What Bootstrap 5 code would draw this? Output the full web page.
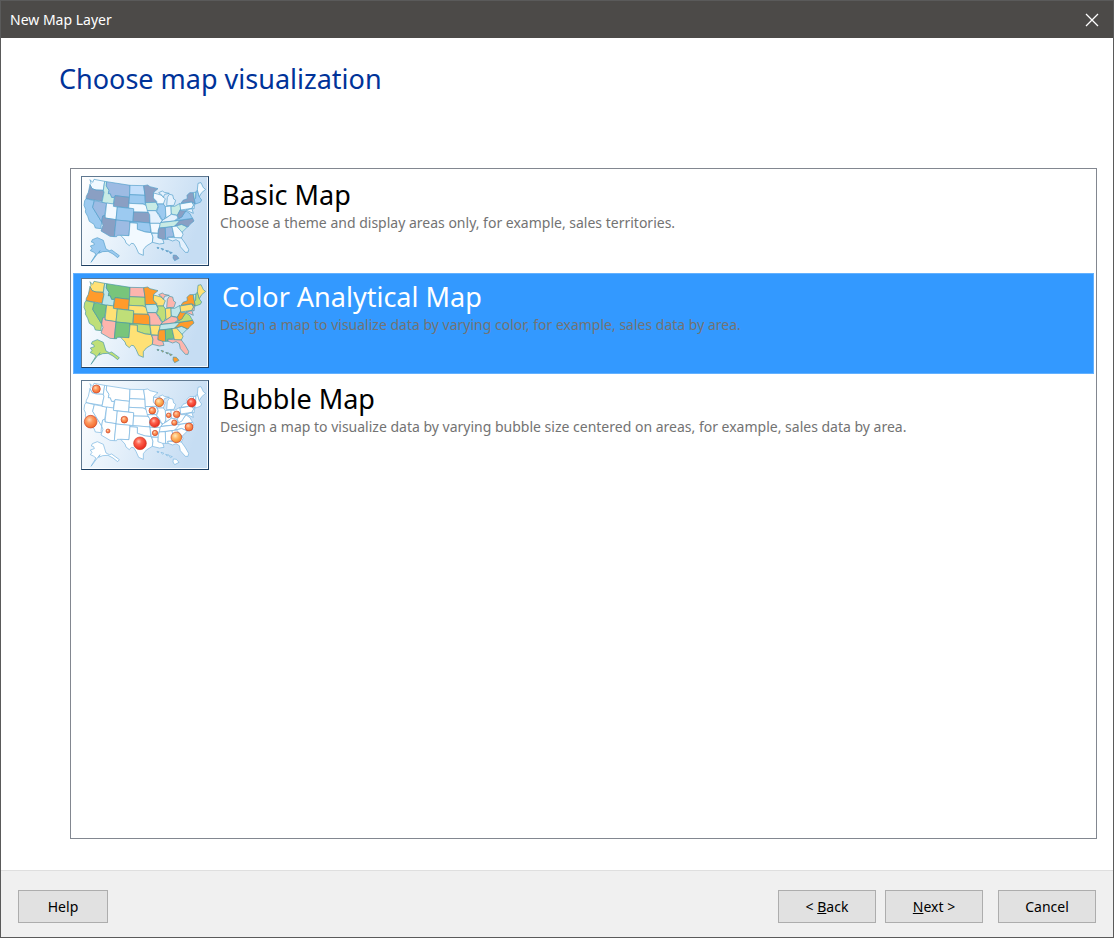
<!DOCTYPE html>
<html lang="en">
<head>
<meta charset="utf-8">
<meta name="viewport" content="width=device-width, initial-scale=1">
<title>New Map Layer</title>
<link href="https://cdn.jsdelivr.net/npm/bootstrap@5.3.0/dist/css/bootstrap.min.css" rel="stylesheet">
<style>
  body { font-family: "Noto Sans", "Open Sans", sans-serif; font-size: 14px; line-height: 20px; color: #000; }
  .wizard { border: 1px solid #5a5a5a; background: #fff; }
  .wizard-title { height: 37px; background: #4c4a48; color: #fff; padding-left: 9px; padding-right: 14px; }
  .close-x { width: 14px; height: 14px; }
  .wizard-heading { font-size: 27px; font-weight: 400; line-height: 36px; color: #003399; padding: 23px 0 0 58px; margin-bottom: 71px; }
  .choices { border: 1px solid #828790; margin: 0 16px 31px 69px; padding: 2px; gap: 1px; }
  .choices .list-group-item { border: 1px solid transparent; border-radius: 0; padding: 4px 7px 5px; color: #000; background: #fff; }
  .choices .list-group-item.active { background: #3399ff; border-color: #63b1ff; color: #fff; margin-top: 0; }
  .thumb { width: 128px; height: 90px; border: 1px solid #5f7890; border-right-color: #1d3f63; border-bottom-color: #1d3f63; display: block; }
  .choice-text { padding-left: 11px; }
  .choice-name { font-size: 27px; line-height: 38px; padding-left: 2px; }
  .choice-note { font-size: 14px; line-height: 18px; color: #737373; }
  .wizard-foot { background: #f0f0f0; border-top: 1px solid #dfdfdf; padding: 19px 17px 14px; }
  .wizard-foot .btn { border: 1px solid #adadad; border-radius: 0; background: #e1e1e1; color: #000; font-size: 14px; line-height: 20px; width: 98px; height: 33px; padding: 0; }
  .wizard-foot .btn-help { width: 90px; }
  .btn-back { margin-right: 9px; }
  .btn-next { margin-right: 15px; }

  /* State fills, themed per thumbnail */
  .wa,.ut,.ne,.tx,.ar,.wi,.in,.pa,.ga,.me { fill: var(--yellow, #fff); }
  .or,.wy,.ks,.mn,.ms,.wv,.ny,.nc,.hi { fill: var(--orange, #fff); }
  .mt,.nv,.nm,.al { fill: var(--green, #fff); }
  .ca,.co,.sd,.ok,.il,.va,.ak,.nh { fill: var(--lime, #fff); }
  .mo,.la,.mi,.ky,.fl,.nj { fill: var(--pink, #fff); }
  .az { fill: var(--az, var(--pink, #fff)); }
  .nd { fill: var(--nd, var(--pink, #fff)); }
  .id,.ia,.oh,.tn,.sc,.vt { fill: var(--aqua, #fff); }
  .map-basic { --yellow: #f2f9ff; --orange: #8a9fc3; --green: #9dbbe3; --lime: #9ccaf0; --pink: #e4f1fd; --aqua: #c8ebe5; --az: #8a9fc3; --nd: #c3dffb; stroke: #529fca; }
  .map-color { --yellow: #ffe175; --orange: #ff9b2b; --green: #78c57b; --lime: #bfdf78; --pink: #fdb5ad; --aqua: #bfe6e9; stroke: #4596a5; }
  .map-bubble { stroke: #75b4df; }
</style>
</head>
<body>
<svg width="0" height="0" class="position-absolute" aria-hidden="true">
  <defs>
    <linearGradient id="sea" x1="0" y1="0" x2="1" y2="0.25">
      <stop offset="0" stop-color="#fff"/><stop offset="0.4" stop-color="#e8f2fb"/><stop offset="1" stop-color="#c6ddf3"/>
    </linearGradient>
    <radialGradient id="ball-red" cx="0.4" cy="0.35" r="0.65">
      <stop offset="0" stop-color="#ffc4b8"/><stop offset="0.35" stop-color="#ff6550"/><stop offset="1" stop-color="#e8281c"/>
    </radialGradient>
    <radialGradient id="ball-orange" cx="0.4" cy="0.35" r="0.65">
      <stop offset="0" stop-color="#ffd6b5"/><stop offset="0.4" stop-color="#ff9a60"/><stop offset="1" stop-color="#f26a2c"/>
    </radialGradient>
    <radialGradient id="ball-amber" cx="0.4" cy="0.35" r="0.65">
      <stop offset="0" stop-color="#ffe8bd"/><stop offset="0.45" stop-color="#ffb765"/><stop offset="1" stop-color="#f08a2e"/>
    </radialGradient>
    <g id="states" stroke-width="2" stroke-linejoin="round">
      <path class="wa" d="M42 23L50 31L54 22L86 28L82 55L60 54L48 50L42 38L45 34Z"/>
      <path class="or" d="M42 38L48 50L60 54L82 55L84 61L78 88L30 80L31 73L37 61Z"/>
      <path class="ca" d="M30 80L55 86L50 106L77 150L75 165L76 170L58 168L54 157L40 148L35 133L28 120L29 112L24 100L26 86Z"/>
      <path class="nv" d="M55 86L92 93L86 130L80 132L77 150L50 106Z"/>
      <path class="id" d="M86 28L92 29L91 42L99 55L97 65L103 65L107 76L115 76L112 97L78 91L84 61L82 55Z"/>
      <path class="mt" d="M92 29L162 40L160 76L117 71L115 76L107 76L103 65L97 65L99 55L91 42Z"/>
      <path class="wy" d="M117 71L160 76L158 108L112 103Z"/>
      <path class="ut" d="M92 93L113 96L112 103L124 105L120 143L87 138Z"/>
      <path class="az" d="M87 138L120 143L115 194L102 193L75 177L81 160L77 150L80 132L86 130Z"/>
      <path class="co" d="M124 105L173 110L171 149L120 144Z"/>
      <path class="nm" d="M120 144L162 148L159 191L133 190L124 190L122 194L115 194Z"/>
      <path class="nd" d="M162 40L203 41L207 70L161 68Z"/>
      <path class="sd" d="M161 68L207 70L208 98L201 96L159 94Z"/>
      <path class="ne" d="M159 94L201 96L210 100L218 121L173 120L173 110L158 108Z"/>
      <path class="ks" d="M173 120L216 121L221 128L222 153L171 149Z"/>
      <path class="ok" d="M162 148L222 153L224 181L208 180L184 172L184 154L162 152Z"/>
      <path class="tx" d="M162 152L184 154L184 172L208 180L226 182L231 195L229 211L211 222L202 233L202 250L188 244L180 226L173 215L166 214L160 221L150 213L147 204L134 190L159 191Z"/>
      <path class="mn" d="M203 41L215 39L222 44L246 50L233 61L232 73L235 82L243 91L208 92L207 70Z"/>
      <path class="ia" d="M208 92L240 91L246 103L241 116L214 116Z"/>
      <path class="mo" d="M214 116L239 116L249 131L258 146L253 158L250 154L222 154L221 128Z"/>
      <path class="ar" d="M222 154L250 154L253 158L247 174L247 184L226 182Z"/>
      <path class="la" d="M227 184L247 184L246 197L259 198L264 214L250 216L229 211L231 196Z"/>
      <path class="wi" d="M233 63L244 66L258 70L262 76L268 80L262 96L243 96L242 88L232 78Z"/>
      <path class="il" d="M244 96L262 96L268 104L270 130L263 145L256 140L250 128L242 118L247 105Z"/>
      <path class="mi" d="M248 62L259 57L265 61L280 64L266 67L262 76L258 70ZM272 101L274 76L280 67L290 69L293 81L299 85L294 100Z"/>
      <path class="in" d="M268 104L285 102L286 127L270 138Z"/>
      <path class="oh" d="M285 103L296 103L312 94L314 111L304 130L286 126Z"/>
      <path class="ky" d="M254 151L262 143L272 137L286 127L302 130L306 138L294 147Z"/>
      <path class="tn" d="M253 152L312 145L304 156L296 163L250 168Z"/>
      <path class="ms" d="M250 168L268 167L269 202L260 202L246 197L247 176Z"/>
      <path class="al" d="M268 167L288 164L294 193L275 196L277 202L269 202Z"/>
      <path class="ga" d="M288 164L302 162L318 178L321 188L316 198L296 198L294 191Z"/>
      <path class="fl" d="M275 196L316 198L327 213L338 232L336 241L328 241L313 224L310 209L300 203L290 207L277 202Z"/>
      <path class="sc" d="M301 161L317 157L334 165L318 181Z"/>
      <path class="nc" d="M296 162L312 145L350 139L354 147L342 157L336 165L317 157Z"/>
      <path class="va" d="M298 146L316 135L330 117L342 125L346 133L350 139Z"/>
      <path class="wv" d="M304 130L314 111L316 116L330 116L324 124L318 135L308 140Z"/>
      <path class="pa" d="M312 96L347 90L353 99L348 109L314 114Z"/>
      <path class="nj" d="M348 91L356 95L354 111L348 108L353 99ZM330 114L348 110L352 124L343 120Z"/>
      <path class="ny" d="M315 94L321 85L334 80L333 70L341 62L352 62L356 84L358 96L347 89Z"/>
      <path class="vt" d="M352 62L360 60L359 79L355 82Z"/>
      <path class="nh" d="M360 60L364 54L371 76L377 84L373 91L358 96L355 82L359 79Z"/>
      <path class="me" d="M364 54L366 34L375 32L382 47L389 52L377 62L370 74Z"/>
      <path class="ak" d="M49 203L64 197L82 205L90 231L100 236L107 234L118 242L130 251L125 257L111 246L96 238L80 239L68 244L72 236L64 246L45 271L60 246L52 240L43 236L48 229L43 222L55 218L53 212L46 210Z"/>
      <path class="hi" d="M243 226L249 227L246 231ZM255 229L263 231L260 235ZM269 235L278 237L273 240ZM280 239L289 242L283 245ZM292 249L301 250L309 259L296 266L291 258Z"/>
    </g>
  </defs>
</svg>

<main class="wizard d-flex flex-column min-vh-100">
  <header class="wizard-title d-flex align-items-center justify-content-between">
    <span>New Map Layer</span>
    <button type="button" class="btn p-0 border-0 d-flex" aria-label="Close">
      <svg class="close-x" viewBox="0 0 14 14"><path d="M1 1L13 13M13 1L1 13" stroke="#fff" stroke-width="1.3"/></svg>
    </button>
  </header>

  <h1 class="wizard-heading">Choose map visualization</h1>

  <div class="choices list-group rounded-0 flex-grow-1">
    <button type="button" class="list-group-item list-group-item-action d-flex align-items-start">
      <svg class="thumb flex-shrink-0" viewBox="18 15 378 264" preserveAspectRatio="none" aria-hidden="true">
        <rect x="18" y="15" width="378" height="264" fill="url(#sea)"/>
        <use href="#states" class="map-basic"/>
        <path d="M19 278H395V16" fill="none" stroke="#fff" stroke-width="3"/>
      </svg>
      <span class="choice-text d-flex flex-column">
        <span class="choice-name">Basic Map</span>
        <span class="choice-note">Choose a theme and display areas only, for example, sales territories.</span>
      </span>
    </button>
    <button type="button" class="list-group-item list-group-item-action active d-flex align-items-start" aria-current="true">
      <svg class="thumb flex-shrink-0" viewBox="18 15 378 264" preserveAspectRatio="none" aria-hidden="true">
        <rect x="18" y="15" width="378" height="264" fill="url(#sea)"/>
        <use href="#states" class="map-color"/>
        <path d="M19 278H395V16" fill="none" stroke="#fff" stroke-width="3"/>
      </svg>
      <span class="choice-text d-flex flex-column">
        <span class="choice-name">Color Analytical Map</span>
        <span class="choice-note">Design a map to visualize data by varying color, for example, sales data by area.</span>
      </span>
    </button>
    <button type="button" class="list-group-item list-group-item-action d-flex align-items-start">
      <svg class="thumb flex-shrink-0" viewBox="18 15 378 264" preserveAspectRatio="none" aria-hidden="true">
        <rect x="18" y="15" width="378" height="264" fill="url(#sea)"/>
        <use href="#states" class="map-bubble"/>
        <g stroke="#c9422a" stroke-width="2">
          <g fill="url(#ball-orange)">
            <circle cx="61" cy="39" r="12"/><circle cx="44" cy="137" r="19"/><circle cx="96" cy="165" r="6"/>
            <circle cx="145" cy="131" r="10"/><circle cx="229" cy="104" r="10"/><circle cx="278" cy="118" r="7"/>
            <circle cx="302" cy="115" r="10"/><circle cx="295" cy="140" r="8"/><circle cx="237" cy="171" r="8"/>
            <circle cx="339" cy="153" r="12"/>
          </g>
          <g fill="url(#ball-amber)"><circle cx="250" cy="79" r="13"/><circle cx="301" cy="184" r="16"/></g>
          <g fill="url(#ball-red)"><circle cx="192" cy="202" r="19"/><circle cx="236" cy="139" r="15"/><circle cx="347" cy="80" r="13"/></g>
        </g>
        <path d="M19 278H395V16" fill="none" stroke="#fff" stroke-width="3"/>
      </svg>
      <span class="choice-text d-flex flex-column">
        <span class="choice-name">Bubble Map</span>
        <span class="choice-note">Design a map to visualize data by varying bubble size centered on areas, for example, sales data by area.</span>
      </span>
    </button>
  </div>

  <footer class="wizard-foot d-flex align-items-center">
    <button type="button" class="btn btn-help me-auto">Help</button>
    <button type="button" class="btn btn-back">&lt; <u>B</u>ack</button>
    <button type="button" class="btn btn-next"><u>N</u>ext &gt;</button>
    <button type="button" class="btn">Cancel</button>
  </footer>
</main>
<script src="https://cdn.jsdelivr.net/npm/bootstrap@5.3.0/dist/js/bootstrap.bundle.min.js"></script>
</body>
</html>
